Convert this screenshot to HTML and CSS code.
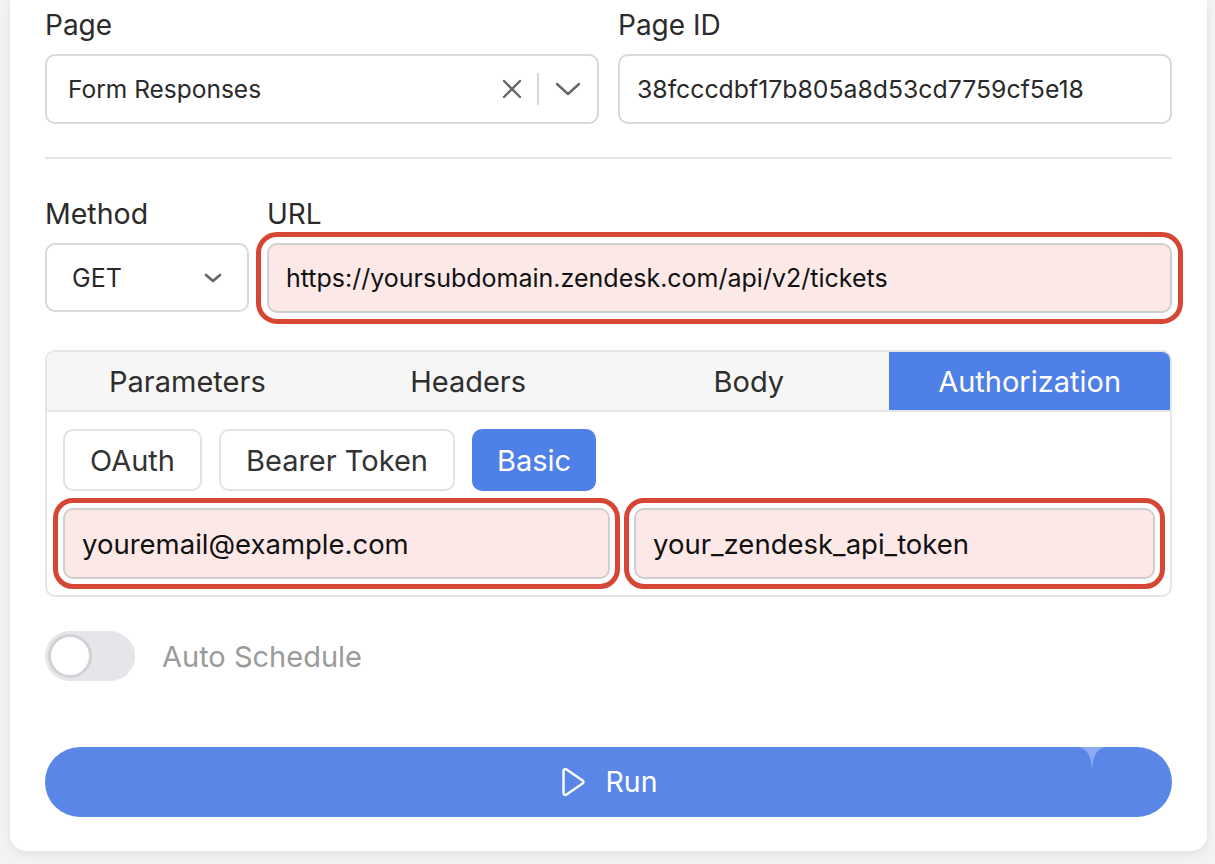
FILE: index.html
```html
<!DOCTYPE html>
<html lang="en">
<head>
<meta charset="utf-8">
<title>Request Settings</title>
<link rel="stylesheet" href="styles.css">
</head>
<body>
<div class="card">
  <div class="row two">
    <div class="field">
      <div class="label">Page</div>
      <div class="select">
        <span class="select-text">Form Responses</span>
        <span class="select-icons">
          <svg class="ico-x" width="22" height="22" viewBox="0 0 22 22"><path d="M3 3L19 19M19 3L3 19" stroke="#666" stroke-width="2.4" stroke-linecap="round" fill="none"/></svg>
          <span class="sep"></span>
          <svg class="ico-chev" width="26" height="16" viewBox="0 0 26 16"><path d="M2 3L13 13L24 3" stroke="#666" stroke-width="2.4" stroke-linecap="round" stroke-linejoin="round" fill="none"/></svg>
        </span>
      </div>
    </div>
    <div class="field">
      <div class="label">Page ID</div>
      <div class="input id-input">38fcccdbf17b805a8d53cd7759cf5e18</div>
    </div>
  </div>

  <hr class="divider">

  <div class="row method-row">
    <div class="field method">
      <div class="label">Method</div>
      <div class="select small">
        <span class="select-text">GET</span>
        <svg class="ico-chev-s" width="20" height="14" viewBox="0 0 20 14"><path d="M3 4L10 10L17 4" stroke="#666" stroke-width="2.6" stroke-linecap="round" stroke-linejoin="round" fill="none"/></svg>
      </div>
    </div>
    <div class="field url">
      <div class="label">URL</div>
      <div class="input hl hl-url">https://yoursubdomain.zendesk.com/api/v2/tickets</div>
    </div>
  </div>

  <div class="tabs">
    <div class="tabbar">
      <div class="tab">Parameters</div>
      <div class="tab">Headers</div>
      <div class="tab">Body</div>
      <div class="tab active">Authorization</div>
    </div>
    <div class="tab-body">
      <div class="auth-types">
        <div class="chip">OAuth</div>
        <div class="chip">Bearer Token</div>
        <div class="chip active">Basic</div>
      </div>
      <div class="creds">
        <div class="input hl hl-sm">youremail@example.com</div>
        <div class="input hl hl-sm">your_zendesk_api_token</div>
      </div>
    </div>
  </div>

  <div class="toggle-row">
    <div class="toggle"><span class="knob"></span></div>
    <span class="toggle-label">Auto Schedule</span>
  </div>

  <div class="run">
    <svg class="ico-play" width="28" height="32" viewBox="0 0 28 32"><path d="M4.5 4.8C4.5 3.3 6 2.5 7.2 3.3L23.6 14.4C24.7 15.2 24.7 16.8 23.6 17.6L7.2 28.7C6 29.5 4.5 28.7 4.5 27.2Z" stroke="#fff" stroke-width="2.4" stroke-linejoin="round" fill="none"/></svg>
    <span>Run</span>
    <svg class="notch" width="26" height="23" viewBox="0 0 26 23"><path d="M0 0H26C18 2 14 8 13 23C12 8 8 2 0 0Z" fill="#8eaaf0"/></svg>
  </div>
</div>
</body>
</html>
```

FILE: styles.css
```css
* { box-sizing: border-box; }
html, body { margin: 0; padding: 0; }
body {
  background: #f3f3f4;
  font-family: Inter, "Noto Sans", "Liberation Sans", sans-serif;
  color: #2a2a2a;
  width: 1215px;
  height: 864px;
  overflow: hidden;
}
.card {
  margin: 0 8px 0 10px;
  background: #fff;
  border-radius: 0 0 16px 16px;
  box-shadow: 0 3px 10px rgba(0,0,0,0.08);
  padding: 6px 35px 34px 35px;
}
.row.two {
  display: grid;
  grid-template-columns: 1fr 1fr;
  gap: 19px;
}
.label {
  font-size: 28px;
  line-height: 38px;
  color: #2b2b2b;
  margin-bottom: 10px;
}
.select, .input {
  height: 70px;
  border: 2px solid #d9d9d9;
  border-radius: 10px;
  display: flex;
  align-items: center;
  font-size: 24.5px;
  color: #2a2a2a;
  background: #fff;
  white-space: nowrap;
}
.select { padding: 0 16px 0 21px; justify-content: space-between; }
.input { padding: 0 17px; }
.id-input { font-size: 24.8px; }
.select-icons { display: flex; align-items: center; }
.ico-x { margin-right: 14px; }
.sep { width: 2px; height: 32px; background: #d6d6d6; margin-right: 16px; }
.divider {
  border: 0;
  height: 2px;
  background: #e6e6e6;
  margin: 33px 0 0 0;
}
.method-row {
  display: grid;
  grid-template-columns: 204px 1fr;
  gap: 18px;
  margin-top: 36px;
}
.method .label { font-size: 28.5px; }
.select.small { height: 69px; padding: 0 24px 0 25px; }
.select.small .select-text { font-size: 25px; }
.hl {
  background: #fce8e7;
  border-color: #cfcfcf;
  color: #111;
  outline: 5px solid #d64634;
  outline-offset: 6px;
}
.hl-url { height: 70px; font-size: 25px; }
.tabs {
  margin-top: 37px;
  border: 2px solid #e6e6e6;
  border-radius: 10px;
  overflow: hidden;
}
.tabbar {
  display: grid;
  grid-template-columns: repeat(4, 1fr);
  background: #f6f6f6;
  border-bottom: 2px solid #e6e6e6;
  height: 60px;
}
.tab {
  display: flex;
  align-items: center;
  justify-content: center;
  font-size: 29px;
  color: #2e2e2e;
}
.tab.active { background: #4f80e8; color: #fff; }
.tab-body { padding: 17px 15px 16px 16px; }
.auth-types { display: flex; gap: 17px; }
.chip {
  height: 62px;
  padding: 0 25px;
  border: 2px solid #e3e3e3;
  border-radius: 10px;
  display: flex;
  align-items: center;
  font-size: 29px;
  color: #333;
}
.chip.active { background: #4f80e8; border-color: #4f80e8; color: #fff; padding: 0 23px; }
.creds {
  display: grid;
  grid-template-columns: 547fr 521fr;
  gap: 24px;
  margin-top: 17px;
}
.hl-sm {
  height: 71px;
  font-size: 27.5px;
  outline-offset: 5px;
}
.toggle-row {
  display: flex;
  align-items: center;
  margin-top: 34px;
  gap: 27px;
}
.toggle {
  width: 90px;
  height: 50px;
  border-radius: 25px;
  background: #e5e5ea;
  padding: 3px;
}
.knob {
  display: block;
  width: 44px;
  height: 44px;
  border-radius: 50%;
  background: #fff;
  border: 3px solid #d2d2d6;
}
.toggle-label { font-size: 29px; color: #9b9b9b; }
.run {
  position: relative;
  margin-top: 66px;
  height: 70px;
  border-radius: 35px;
  background: #5a87e7;
  display: flex;
  align-items: center;
  justify-content: center;
  gap: 18px;
  color: #fff;
  font-size: 28.5px;
}
.run span { margin-top: -2px; }
.notch { position: absolute; top: 0; left: 1034px; }
```
